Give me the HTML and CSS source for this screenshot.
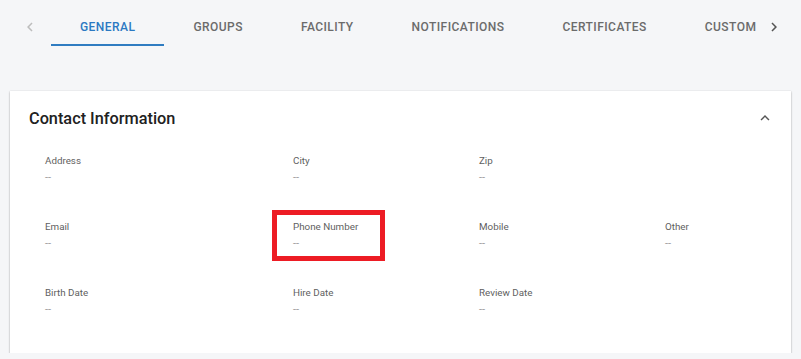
FILE: index.html
```html
<!DOCTYPE html>
<html lang="en">
<head>
<meta charset="utf-8">
<title>Contact Information</title>
<link rel="stylesheet" href="styles.css">
</head>
<body>
<div class="page">
  <nav class="tabbar">
    <button class="tab-arrow tab-arrow-left is-disabled" aria-label="Previous">
      <svg viewBox="0 0 24 24" width="18" height="18"><path d="M15.41 7.41L14 6l-6 6 6 6 1.41-1.41L10.83 12z"/></svg>
    </button>
    <div class="tab-viewport">
      <div class="tab-list">
        <div class="tab is-active">GENERAL</div>
        <div class="tab">GROUPS</div>
        <div class="tab">FACILITY</div>
        <div class="tab">NOTIFICATIONS</div>
        <div class="tab">CERTIFICATES</div>
        <div class="tab">CUSTOM FIELDS</div>
      </div>
    </div>
    <button class="tab-arrow tab-arrow-right" aria-label="Next">
      <svg viewBox="0 0 24 24" width="18" height="18"><path d="M10 6L8.59 7.41 13.170 12l-4.58 4.59L10 18l6-6z"/></svg>
    </button>
  </nav>

  <section class="card">
    <header class="card-header">
      <h2 class="card-title">Contact Information</h2>
      <svg class="collapse-icon" viewBox="0 0 24 24" width="18" height="18"><path d="M12 8l-6 6 1.41 1.41L12 10.83l4.59 4.58L18 14z"/></svg>
    </header>
    <div class="fields">
      <div class="field"><div class="field-label">Address</div><div class="field-value">--</div></div>
      <div class="field"><div class="field-label">City</div><div class="field-value">--</div></div>
      <div class="field"><div class="field-label">Zip</div><div class="field-value">--</div></div>
      <div class="field"></div>

      <div class="field"><div class="field-label">Email</div><div class="field-value">--</div></div>
      <div class="field field-highlighted"><span class="highlight-box"></span><div class="field-label">Phone Number</div><div class="field-value">--</div></div>
      <div class="field"><div class="field-label">Mobile</div><div class="field-value">--</div></div>
      <div class="field"><div class="field-label">Other</div><div class="field-value">--</div></div>

      <div class="field"><div class="field-label">Birth Date</div><div class="field-value">--</div></div>
      <div class="field"><div class="field-label">Hire Date</div><div class="field-value">--</div></div>
      <div class="field"><div class="field-label">Review Date</div><div class="field-value">--</div></div>
      <div class="field"></div>
    </div>
  </section>
</div>
</body>
</html>
```

FILE: styles.css
```css
* { box-sizing: border-box; }

html, body {
  margin: 0;
  padding: 0;
  background: #f5f6f8;
  font-family: Roboto, "Liberation Sans", sans-serif;
}

.page {
  padding: 8px 10px 0;
}

.tabbar {
  display: flex;
  align-items: stretch;
  height: 38px;
}

.tab-arrow {
  border: 0;
  background: transparent;
  padding: 0;
  display: flex;
  align-items: center;
  justify-content: center;
  fill: #555;
  cursor: pointer;
}
.tab-arrow-left { width: 41px; padding-right: 1px; }
.tab-arrow-right { width: 35px; }
.tab-arrow.is-disabled { fill: #bdbdbd; }

.tab-viewport {
  flex: 1;
  overflow: hidden;
}

.tab-list {
  display: flex;
  height: 100%;
}

.tab {
  flex: none;
  height: 100%;
  padding: 2px 29px 0 29px;
  display: flex;
  align-items: center;
  font-size: 12px;
  font-weight: 500;
  letter-spacing: 0.45px;
  color: #6b6b6b;
  white-space: nowrap;
  border-bottom: 2px solid transparent;
}

.tab.is-active {
  color: #2b79c2;
  border-bottom-color: #2f7cc1;
}

.card {
  margin-top: 45px;
  background: #fff;
  box-shadow: 0 1px 2px rgba(0,0,0,0.3), 0 0 1px rgba(0,0,0,0.12);
  padding: 0 18px 36px 19px;
}

.card-header {
  height: 54px;
  display: flex;
  align-items: center;
  justify-content: space-between;
}

.card-title {
  margin: 0;
  font-size: 16.3px;
  font-weight: 500;
  color: #212121;
}

.collapse-icon {
  fill: #555;
  margin-right: -1px;
}

.fields {
  display: grid;
  grid-template-columns: 248px 186px 186px 1fr;
  row-gap: 35px;
  padding: 9px 0 0 16px;
}

.field {
  position: relative;
  min-height: 31px;
}

.field-label {
  font-size: 9.8px;
  line-height: 14px;
  color: #5f5f5f;
}

.field-value {
  margin-top: 3px;
  font-size: 11px;
  line-height: 14px;
  color: #9e9e9e;
}

.highlight-box {
  position: absolute;
  left: -21px;
  top: -10px;
  width: 113px;
  height: 51px;
  border: 5px solid #ed1c24;
}
```
